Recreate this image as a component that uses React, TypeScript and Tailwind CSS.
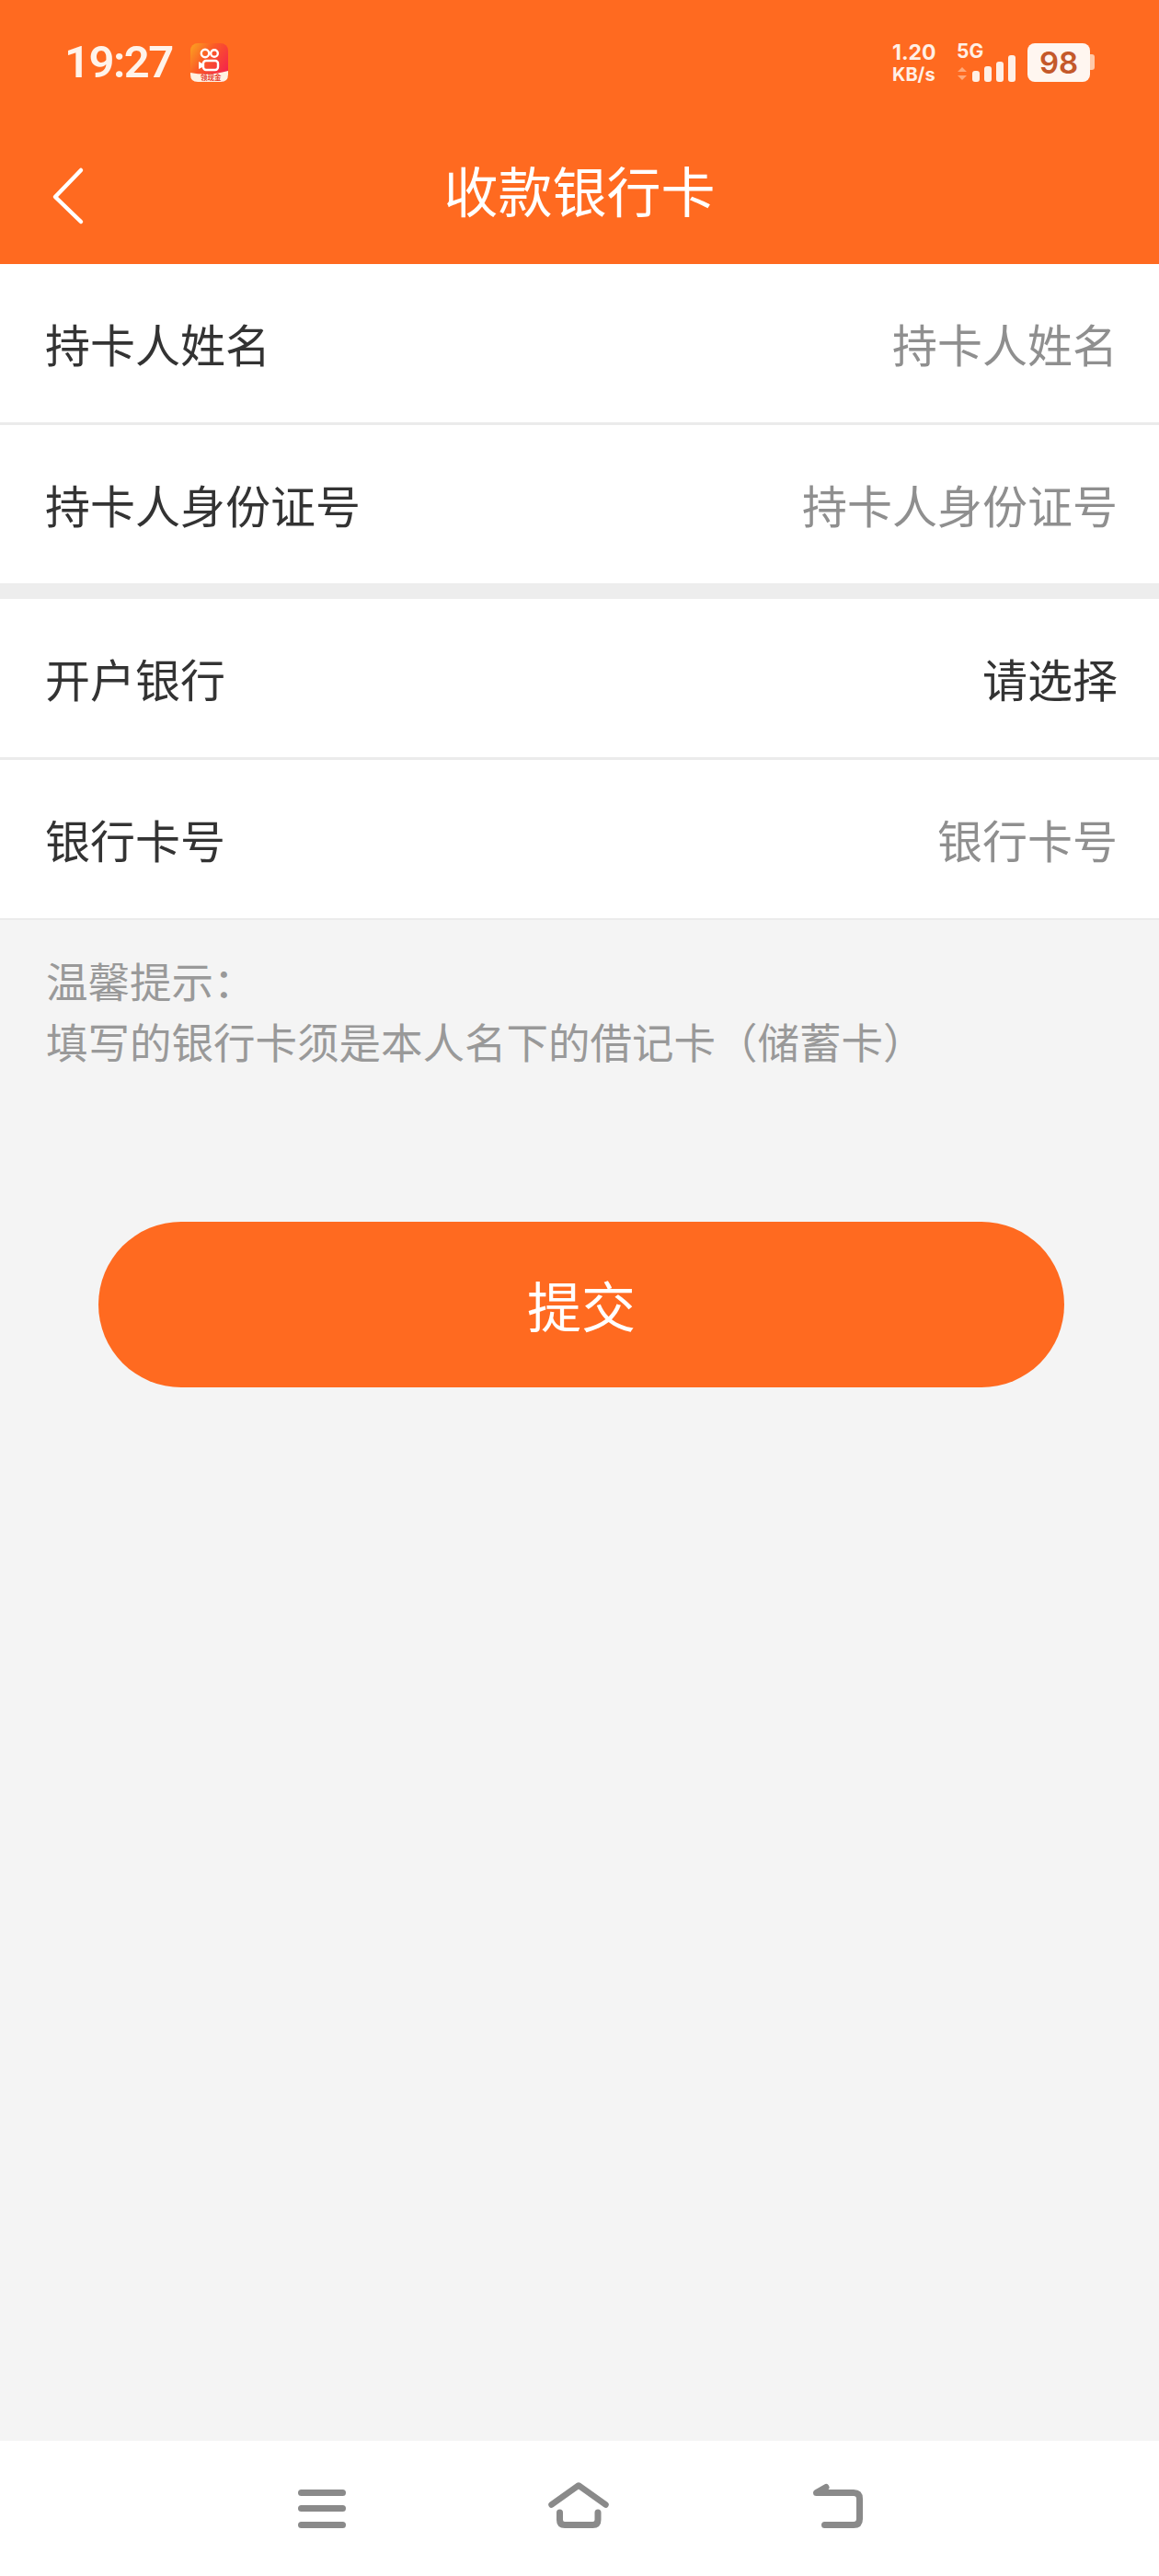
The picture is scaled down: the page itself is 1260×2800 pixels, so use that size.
import { Fragment } from 'react';

const cjk = "font-['Noto_Sans_CJK_SC','Noto_Sans',sans-serif]";

function AppBadge() {
  return (
    <svg width="41" height="42" viewBox="0 0 41 42" className="ml-[20px] mt-[1px]">
      <defs>
        <linearGradient id="kw" x1="0" y1="0" x2="1" y2="0.7">
          <stop offset="0" stopColor="#fba521" />
          <stop offset="0.45" stopColor="#fb5a26" />
          <stop offset="1" stopColor="#f4234c" />
        </linearGradient>
      </defs>
      <rect width="41" height="42" rx="8" fill="url(#kw)" />
      <path d="M0 32 Q20 36 41 30 V34 Q41 42 33 42 H8 Q0 42 0 34 Z" fill="#fff1e2" />
      <circle cx="16" cy="11" r="4.2" fill="none" stroke="#fff" strokeWidth="2.4" />
      <circle cx="26" cy="11" r="3.8" fill="none" stroke="#fff" strokeWidth="2.4" />
      <rect x="14" y="19" width="16" height="10" rx="3" fill="none" stroke="#fff" strokeWidth="2.4" />
      <path d="M13 22 L9 20 V28 L13 26 Z" fill="#fff" />
      <text x="11" y="40" fontSize="7.5" fontWeight="700" fill="#e5402f">领现金</text>
    </svg>
  );
}

function StatusBar() {
  return (
    <div className="h-[96px] pt-[46px] pl-[70px] pr-[70px] flex items-start justify-between">
      <div className="flex items-start">
        <span className="w-[117px] whitespace-nowrap text-[49px] leading-[44px] font-semibold tracking-[-1.5px] text-[#fff3ea] font-['Roboto',sans-serif]">
          19:27
        </span>
        <AppBadge />
      </div>
      <div className="flex items-start text-[#fff0e6] font-['Inter',sans-serif] font-bold">
        <div className="w-[50px] flex flex-col items-start text-[23px] leading-[24px] mt-[-1px] whitespace-nowrap">
          <span>1.20</span>
          <span className="text-[20px]">KB/s</span>
        </div>
        <div className="ml-[20px] w-[65px] relative h-[46px]">
          <span className="absolute left-0 top-[-1px] text-[21px] leading-[22px]">5G</span>
          <svg width="65" height="46" viewBox="0 0 65 46" className="absolute left-0 top-0">
            <path d="M1 32 L6 27 L11 32 Z M1 36 L11 36 L6 41 Z" fill="#ffa878" />
            <rect x="17" y="31" width="8" height="12" rx="3" fill="#fff0e6" />
            <rect x="30" y="26" width="8" height="17" rx="3" fill="#fff0e6" />
            <rect x="43" y="21" width="8" height="22" rx="3" fill="#fff0e6" />
            <rect x="56" y="14" width="8" height="29" rx="3" fill="#fff0e6" />
          </svg>
        </div>
        <div className="ml-[12px] flex items-center">
          <div className="w-[68px] h-[42px] mt-[1px] rounded-[8px] bg-[#fff6f0] text-[#c4592a] text-[33px] leading-[42px] text-center font-semibold">
            98
          </div>
          <div className="w-[5px] h-[17px] rounded-r-[3px] bg-[#ffc9a8]" />
        </div>
      </div>
    </div>
  );
}

function Row({ label, value, dark }: { label: string; value: string; dark?: boolean }) {
  return (
    <div className="h-[172px] pl-[49px] pr-[45px] flex items-center justify-between bg-white">
      <span className="text-[49px] leading-[60px] text-[#333333]">{label}</span>
      <span className={`text-[49px] leading-[60px] ${dark ? 'text-[#333333]' : 'text-[#8f8f8f]'}`}>{value}</span>
    </div>
  );
}

const groupOne = [
  { label: '持卡人姓名', value: '持卡人姓名' },
  { label: '持卡人身份证号', value: '持卡人身份证号' },
];

const groupTwo = [
  { label: '开户银行', value: '请选择', dark: true },
  { label: '银行卡号', value: '银行卡号' },
];

export default function App() {
  return (
    <div className={`w-[1260px] h-[2800px] flex flex-col bg-[#f4f4f4] ${cjk}`}>
      <div className="bg-[#ff6a20] h-[287px] shrink-0">
        <StatusBar />
        <div className="h-[191px] pt-[28px] relative flex items-center justify-center">
          <svg width="40" height="64" viewBox="0 0 40 64" className="absolute left-[55px] top-[85px]">
            <path d="M33 4 L5 33 L33 60" fill="none" stroke="#fff" strokeWidth="4.5" strokeLinecap="round" strokeLinejoin="round" />
          </svg>
          <span className="text-[59px] leading-[70px] text-white">收款银行卡</span>
        </div>
      </div>

      {groupOne.map((r, i) => (
        <Fragment key={r.label}>
          <Row {...r} />
          {i === 0 && <div className="h-[3px] bg-[#ebebeb]" />}
        </Fragment>
      ))}
      <div className="h-[17px] bg-[#ededed]" />
      {groupTwo.map((r, i) => (
        <Fragment key={r.label}>
          <Row {...r} />
          {i === 0 && <div className="h-[3px] bg-[#ebebeb]" />}
        </Fragment>
      ))}
      <div className="h-[2px] bg-[#ebebeb]" />

      <div className="pl-[50px] pt-[32px] text-[45.5px] leading-[66px] text-[#999999]">
        <div>温馨提示：</div>
        <div>填写的银行卡须是本人名下的借记卡（储蓄卡）</div>
      </div>

      <button className="mt-[164px] ml-[107px] w-[1050px] h-[180px] rounded-full bg-[#ff6a20] text-white text-[59px]">提交</button>

      <div className="mt-auto h-[147px] bg-white flex items-end justify-between pl-[324px] pr-[322px] pb-[52px]">
        <svg width="52" height="42" viewBox="0 0 52 42">
          <rect x="0" y="0" width="52" height="7" rx="3.5" fill="#8a8a8a" />
          <rect x="0" y="17" width="52" height="7" rx="3.5" fill="#8a8a8a" />
          <rect x="0" y="35" width="52" height="7" rx="3.5" fill="#8a8a8a" />
        </svg>
        <svg width="66" height="50" viewBox="0 0 66 50">
          <path d="M3.5 24.5 L33 3.5 L62.5 24.5" fill="none" stroke="#8a8a8a" strokeWidth="6.5" strokeLinecap="round" strokeLinejoin="round" />
          <path d="M12.5 33 V41 Q12.5 46.5 18 46.5 H48.5 Q54 46.5 54 41 V33" fill="none" stroke="#8a8a8a" strokeWidth="7" strokeLinecap="round" />
        </svg>
        <svg width="56" height="50" viewBox="0 0 56 50">
          <path d="M14.5 46.5 H46 Q52.5 46.5 52.5 40 V18 Q52.5 11.5 46 11.5 H5.5 L16 5.5" fill="none" stroke="#8a8a8a" strokeWidth="7" strokeLinecap="round" strokeLinejoin="round" />
        </svg>
      </div>
    </div>
  );
}
